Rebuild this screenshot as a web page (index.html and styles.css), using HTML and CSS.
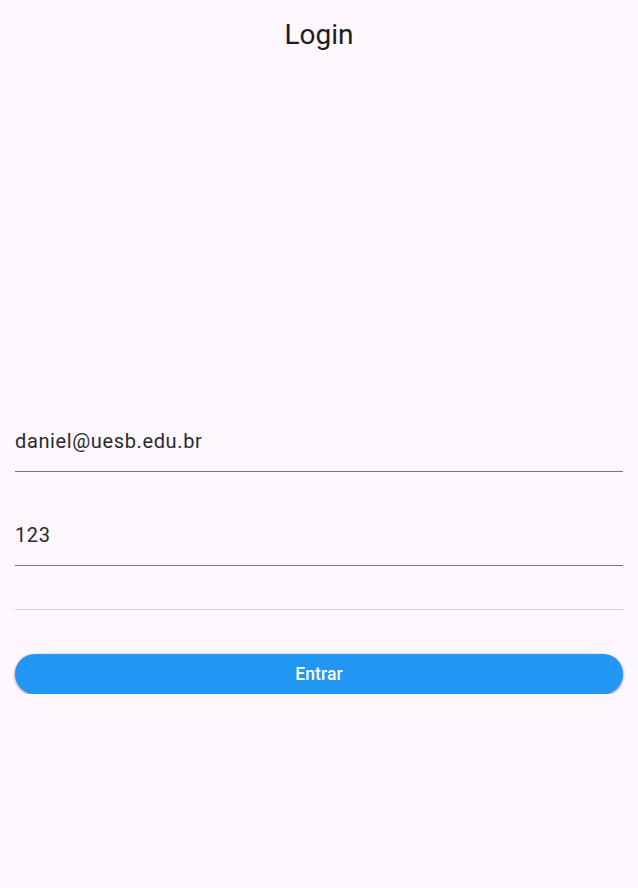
FILE: index.html
```html
<!DOCTYPE html>
<html lang="pt">
<head>
<meta charset="utf-8">
<title>Login</title>
<link rel="stylesheet" href="styles.css">
</head>
<body>
<header class="appbar"><h1 class="title">Login</h1></header>
<main class="form">
  <div class="field field-email"><span class="value">daniel@uesb.edu.br</span></div>
  <div class="field field-pass"><span class="value">123</span></div>
  <div class="field field-empty"></div>
  <button class="btn" type="button">Entrar</button>
</main>
</body>
</html>
```
FILE: styles.css
```css
html, body {
  margin: 0;
  padding: 0;
  background: #fef7ff;
  font-family: Roboto, "Noto Sans", sans-serif;
  color: #1d1b20;
}
.appbar {
  height: 69px;
  display: flex;
  align-items: center;
  justify-content: center;
}
.title {
  margin: 0;
  font-size: 28px;
  font-weight: 400;
  line-height: 35px;
  color: #1d1b20;
}
.form {
  padding: 345px 15px 0;
  display: flex;
  flex-direction: column;
}
.field {
  padding: 12px 0 15px;
  line-height: 30px;
  font-size: 20px;
  letter-spacing: 0.625px;
  border-bottom: 1px solid #79747e;
  color: #2b2930;
}
.field-pass { margin-top: 36px; }
.field-empty {
  padding: 0;
  height: 43px;
  border-bottom-color: #d6d0d9;
}
.btn {
  margin-top: 44px;
  height: 40px;
  border: none;
  border-radius: 20px;
  background: #2196f3;
  color: #fff;
  font-family: Roboto, "Noto Sans", sans-serif;
  font-size: 17.5px;
  font-weight: 500;
  letter-spacing: 0.125px;
  box-shadow: 0 1px 2px rgba(0,0,0,0.3), 0 1px 3px 1px rgba(0,0,0,0.15);
  padding: 0;
}
```
